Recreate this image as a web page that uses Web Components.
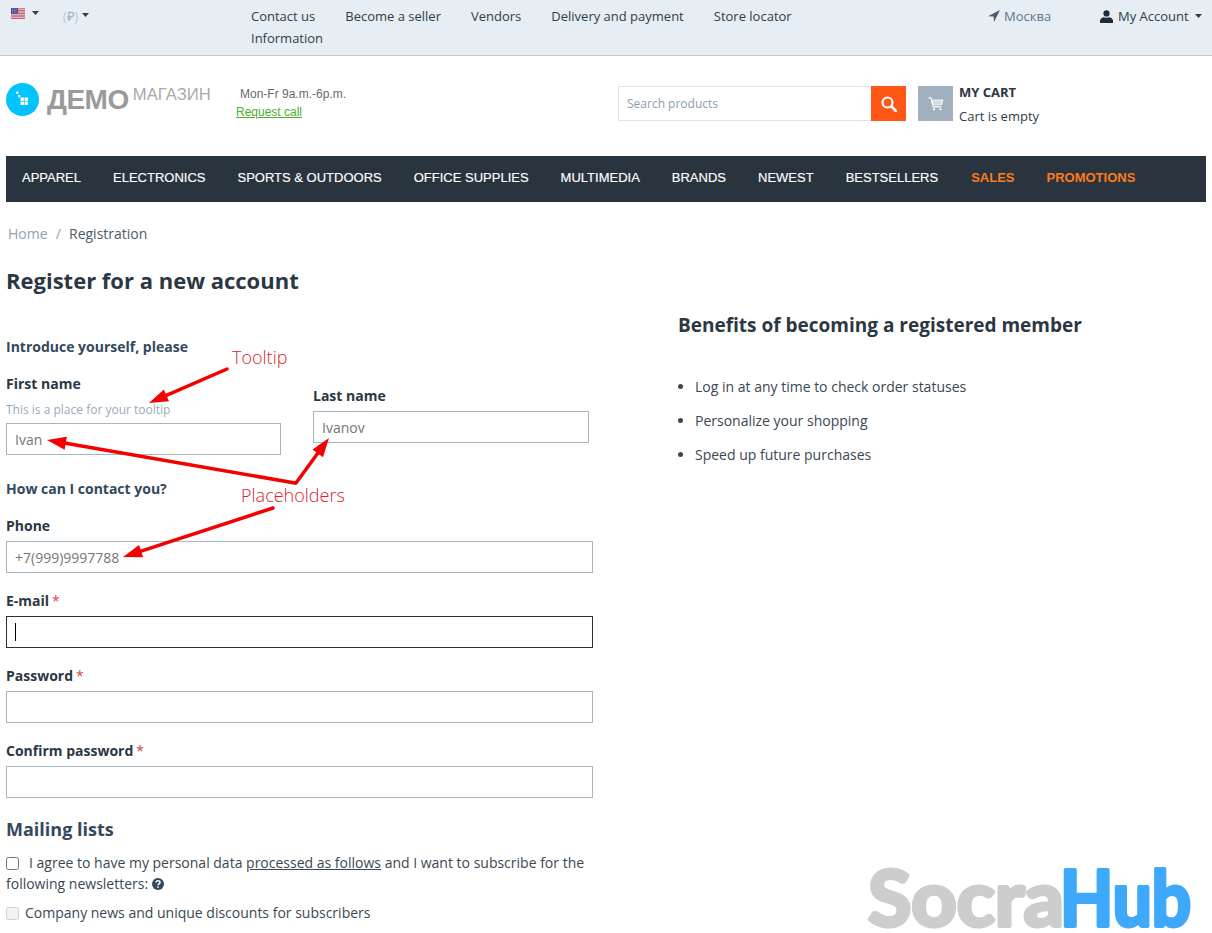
<!DOCTYPE html>
<html lang="en">
<head>
<meta charset="utf-8">
<title>Register for a new account</title>
<style>
    html, body { margin: 0; height: 933px; overflow: hidden; background: #fff; }
    body { position: relative; font: 14px/20px "Open Sans", sans-serif; color: #2c3744; }
</style>
</head>
<body>
<top-bar></top-bar>
<site-header></site-header>
<main-nav></main-nav>
<bread-crumbs></bread-crumbs>
<register-page></register-page>
<note-layer></note-layer>
<hub-mark></hub-mark>

<script>
const CARET = `<svg class="caret" width="7" height="4" viewBox="0 0 7 4"><path d="M0 0h7L3.5 4z" fill="currentColor"/></svg>`;

const FLAG = `<svg width="14" height="11" viewBox="0 0 14 11">
    <rect width="14" height="11" fill="#f3f3f6"/>
    <path d="M0 .8h14M0 2.4h14M0 4h14M0 5.6h14M0 7.2h14M0 8.8h14M0 10.4h14" stroke="#b5354a" stroke-width=".85"/>
    <rect width="7" height="5.6" fill="#47478f"/>
    <path d="M1 1h5M1 2.5h5M1 4h5" stroke="#c4c4e2" stroke-width=".7" stroke-dasharray="1 .8"/>
</svg>`;

class TopBar extends HTMLElement {
    constructor() {
        super();
        this.attachShadow({ mode: 'open' });
        this.shadowRoot.innerHTML = `
<style>
    :host {
        display: flex;
        height: 55px;
        box-sizing: content-box;
        background: #e6eef3;
        border-bottom: 1px solid #b6cbd9;
        font: 13px/22px "Open Sans", sans-serif;
        color: #2f3d4b;
    }
    .flag { width: 52px; flex: none; padding: 4px 0 0 11px; display: flex; gap: 7px; align-items: center; height: 18px; box-sizing: content-box; }
    .cur { width: 188px; flex: none; padding-top: 5px; font-size: 13px; font-weight: 300; color: #9fb0bf; display: flex; gap: 4px; height: 22px; align-items: center; }
    .cur .caret { color: #2f3d4b; margin-top: -3px; }
    nav { width: 600px; flex: none; margin-top: 5px; display: flex; flex-wrap: wrap; column-gap: 30px; align-content: flex-start; }
    .city { width: 112px; flex: none; margin-left: 137px; margin-top: 5px; height: 22px; display: flex; align-items: center; gap: 4px; color: #5f7589; }
    .acct { margin-top: 5px; height: 22px; display: flex; align-items: center; gap: 5px; white-space: nowrap; }
    .acct .caret { margin-left: 1px; }
</style>
<div class="flag">${FLAG}${CARET}</div>
<div class="cur"><span>(₽)</span>${CARET}</div>
<nav>
    <span>Contact us</span><span>Become a seller</span><span>Vendors</span>
    <span>Delivery and payment</span><span>Store locator</span><span>Information</span>
</nav>
<div class="city">
    <svg width="12" height="12" viewBox="0 0 12 12"><path d="M12 0L0 6.2l5.6.3.4 5.5z" fill="#4a5c6c"/></svg>
    <span>Москва</span>
</div>
<div class="acct">
    <svg width="13" height="13" viewBox="0 0 13 13" fill="#1f2a35"><circle cx="6.5" cy="3.4" r="3.1"/><path d="M0 13v-2.2C0 8.6 2.4 7.4 4 7.2c1.5.7 3.5.7 5 0 1.600.2 4 1.400 4 3.600V13z"/></svg>
    <span>My Account</span>${CARET}
</div>`;
    }
}

class SiteHeader extends HTMLElement {
    constructor() {
        super();
        this.attachShadow({ mode: 'open' });
        this.shadowRoot.innerHTML = `
<style>
    :host { display: flex; height: 100px; padding: 27px 6px 0; box-sizing: border-box; align-items: flex-start; }
    .logo { display: flex; width: 230px; height: 33px; align-items: center; }
    .mark { width: 33px; height: 33px; flex: none; }
    .demo { margin-left: 8px; font: bold 28px/33px "Liberation Sans", sans-serif; color: #9a9a9a; letter-spacing: -.5px; }
    .shop { margin-left: 4px; font: 16.700px/22px "Liberation Sans", sans-serif; color: #a9a9a9; margin-top: -9px; }
    .hours { width: 382px; font: 12px/18px "Liberation Sans", sans-serif; color: #6a6a6a; margin-top: 2px; }
    .hours div { padding-left: 4px; }
    .hours a { color: #4cae2e; text-decoration: underline; }
    .search { display: flex; width: 288px; height: 35px; margin-top: 3px; }
    .box { flex: 1; border: 1px solid #e3e3e3; border-right: 0; padding-left: 8px; font: 12px/33px "Open Sans", sans-serif; color: #8d9dac; }
    .go { width: 35px; background: #ff5716; display: flex; align-items: center; justify-content: center; }
    .bag { width: 35px; height: 35px; margin: 3px 0 0 12px; background: #a0b0bf; display: flex; align-items: center; justify-content: center; }
    .cart { margin-left: 6px; margin-top: -3px; font: 13px/24px "Open Sans", sans-serif; color: #2f3d4b; }
    .cart b { display: block; color: #2b3640; }
</style>
<div class="logo">
    <svg class="mark" viewBox="0 0 33 33">
        <circle cx="16.500" cy="16.500" r="16.500" fill="#00c3ff"/>
        <g fill="#fff"><rect x="10" y="8.500" width="2.400" height="2.400"/><rect x="12" y="12" width="2.400" height="2.400"/>
        <rect x="14.500" y="14.500" width="3.400" height="3.400"/><rect x="18.600" y="14.500" width="3.400" height="3.400"/>
        <rect x="14.500" y="18.600" width="3.400" height="3.400"/><rect x="18.600" y="18.600" width="3.400" height="3.400"/></g>
    </svg>
    <span class="demo">ДЕМО</span><span class="shop">МАГАЗИН</span>
</div>
<div class="hours"><div>Mon-Fr 9a.m.-6p.m.</div><a>Request call</a></div>
<div class="search">
    <div class="box">Search products</div>
    <div class="go"><svg width="16" height="16" viewBox="0 0 16 16" fill="none" stroke="#fff"><circle cx="6.500" cy="6.500" r="5" stroke-width="2.200"/><path d="M10.500 10.500L15 15" stroke-width="2.600" stroke-linecap="round"/></svg></div>
</div>
<div class="bag"><svg width="16" height="14" viewBox="0 0 16 14" fill="none" stroke="#fff"><path d="M.5 .8h2.400l2.400 9h8" stroke-width="1.200"/><path d="M3.800 3h11.200l-1.200 4.800H5z" fill="#fff" fill-opacity=".55" stroke-width=".8"/><circle cx="6" cy="12.300" r="1.100" fill="#fff" stroke="none"/><circle cx="12.500" cy="12.300" r="1.100" fill="#fff" stroke="none"/></svg></div>
<div class="cart"><b>MY CART</b>Cart is empty</div>`;
    }
}

class MainNav extends HTMLElement {
    constructor() {
        super();
        this.attachShadow({ mode: 'open' });
        const items = ['Apparel', 'Electronics', 'Sports & Outdoors', 'Office supplies', 'Multimedia', 'Brands', 'Newest', 'Bestsellers'];
        this.shadowRoot.innerHTML = `
<style>
    :host {
        display: flex;
        margin: 0 6px;
        height: 46px;
        background: #29343f;
        font: 13px/43px "Liberation Sans", sans-serif;
        color: #fff;
        text-transform: uppercase;
        -webkit-text-stroke: .15px currentColor;
    }
    span { padding: 0 16px; white-space: nowrap; }
    span:first-child { padding-left: 14px; }
    .hot { color: #ff7a1a; font-weight: bold; -webkit-text-stroke: 0; }
    .hot:nth-last-child(2) { margin-left: 1px; }
</style>
${items.map(i => `<span>${i.replace('&', '&amp;')}</span>`).join('')}
<span class="hot">Sales</span><span class="hot">Promotions</span>`;
    }
}

class BreadCrumbs extends HTMLElement {
    constructor() {
        super();
        this.attachShadow({ mode: 'open' });
        this.shadowRoot.innerHTML = `
<style>
    :host { display: block; margin: 21px 8px 21px; padding-top: 1px; font: 14px/20px "Open Sans", sans-serif; color: #4b5b69; }
    a { color: #8fa3b4; }
    i { font-style: normal; color: #8fa3b4; margin: 0 4.500px; }
</style>
<a>Home</a> <i>/</i> Registration`;
    }
}

class FormField extends HTMLElement {
    constructor() {
        super();
        this.attachShadow({ mode: 'open' });
        const hint = this.getAttribute('hint');
        const star = this.hasAttribute('required') ? '<em>*</em>' : '';
        const focused = this.hasAttribute('focused');
        this.shadowRoot.innerHTML = `
<style>
    :host { display: block; margin-bottom: 18px; }
    label { display: block; font: bold 14px/20px "Open Sans", sans-serif; color: #2c3744; margin-bottom: 5px; }
    label.tight { margin-bottom: 9px; }
    em { font-style: normal; font-weight: normal; color: #e0413d; margin-left: 3px; }
    .hint { font: 12px/14px "Open Sans", sans-serif; color: #9aabba; margin-bottom: 6px; }
    .box {
        height: 32px;
        box-sizing: border-box;
        border: 1px solid #a5b5c2;
        padding: 2px 8px 0;
        font: 14px/28px "Open Sans", sans-serif;
        color: #757575;
        display: flex;
        align-items: center;
    }
    .focused { border-color: #24303b; padding-top: 0; }
    .cursor { width: 1px; height: 18px; background: #000; }
</style>
<label class="${hint ? 'tight' : ''}">${this.getAttribute('label')}${star}</label>
${hint ? `<div class="hint">${hint}</div>` : ''}
<div class="box ${focused ? 'focused' : ''}" role="textbox"><slot></slot>${focused ? '<span class="cursor"></span>' : ''}</div>`;
    }
}

class RegisterPage extends HTMLElement {
    constructor() {
        super();
        this.attachShadow({ mode: 'open' });
        this.shadowRoot.innerHTML = `
<style>
    :host { display: flex; padding-left: 6px; font: 14px/20px "Open Sans", sans-serif; color: #3a4754; }
    .left { width: 587px; flex: none; }
    .right { margin-left: 85px; padding-top: 48px; }
    h1 { margin: 0 0 42px; font: bold 22px/30px "Open Sans", sans-serif; color: #2c3744; }
    h2 { margin: 0 0 17px; font: bold 14px/20px "Open Sans", sans-serif; color: #34485c; }
    h3 { margin: 0 0 40px; font: bold 19px/24px "Open Sans", sans-serif; color: #2c3744; }
    h4 { margin: 19px 0 11px; font: bold 18px/24px "Open Sans", sans-serif; color: #34485c; }
    .names { display: flex; gap: 32px; margin-bottom: 6px; }
    .names form-field:first-child { width: 275px; }
    .names form-field:last-child { width: 276px; margin-top: 12px; }
    ul { margin: 0; padding: 0 0 0 17px; }
    li { margin-bottom: 14px; }
    .check { line-height: 21px; }
    .check input { margin: 0 6px 0 0; width: 13px; height: 13px; vertical-align: -2px; }
    .agree input { margin-right: 10px; }
    .agree { margin-bottom: 8px; }
    .agree a { text-decoration: underline; color: #3a4754; }
    .agree svg { vertical-align: -1px; }
    .off input { appearance: none; box-sizing: border-box; border: 1px solid #cfcfcf; border-radius: 2.500px; background: #f3f3f3; }
</style>
<div class="left">
    <h1>Register for a new account</h1>
    <h2>Introduce yourself, please</h2>
    <div class="names">
        <form-field label="First name" hint="This is a place for your tooltip">Ivan</form-field>
        <form-field label="Last name">Ivanov</form-field>
    </div>
    <h2>How can I contact you?</h2>
    <form-field label="Phone">+7(999)9997788</form-field>
    <form-field label="E-mail" required focused></form-field>
    <form-field label="Password" required></form-field>
    <form-field label="Confirm password" required style="margin-bottom:0"></form-field>
    <h4>Mailing lists</h4>
    <div class="check agree"><input type="checkbox"><span>I agree to have my personal data</span> <a>processed as follows</a> <span>and I want to subscribe for the</span><br>
        <span>following newsletters:</span>
        <svg width="12" height="12" viewBox="0 0 12 12"><circle cx="6" cy="6" r="6" fill="#34485c"/><path d="M4 4.600C4 3.400 4.900 2.800 6 2.800s2 .7 2 1.700c0 1.400-2 1.300-2 2.700" fill="none" stroke="#fff" stroke-width="1.500"/><rect x="5.200" y="8.300" width="1.600" height="1.500" fill="#fff"/></svg>
    </div>
    <div class="check off"><input type="checkbox" disabled>Company news and unique discounts for subscribers</div>
</div>
<div class="right">
    <h3>Benefits of becoming a registered member</h3>
    <ul>
        <li>Log in at any time to check order statuses</li>
        <li>Personalize your shopping</li>
        <li>Speed up future purchases</li>
    </ul>
</div>`;
    }
}

// red annotations drawn over the form
class NoteLayer extends HTMLElement {
    constructor() {
        super();
        this.attachShadow({ mode: 'open' });
        const arrow = (x1, y1, x2, y2) => {
            const a = Math.atan2(y2 - y1, x2 - x1);
            const bx = x2 - Math.cos(a) * 19, by = y2 - Math.sin(a) * 19;
            const nx = -Math.sin(a) * 6.5, ny = Math.cos(a) * 6.5;
            return `<line x1="${x1}" y1="${y1}" x2="${bx}" y2="${by}"/>
                <polygon points="${x2},${y2} ${bx + nx},${by + ny} ${bx - nx},${by - ny}"/>`;
        };
        this.shadowRoot.innerHTML = `
<style>
    :host { position: absolute; left: 0; top: 0; width: 1212px; height: 933px; pointer-events: none; }
    svg { position: absolute; left: 0; top: 0; }
    line { stroke: #f40000; stroke-width: 3.500; stroke-linecap: round; }
    polygon { fill: #f40000; }
    span { position: absolute; font: 300 18px/24px "Open Sans", sans-serif; color: #d9232c; }
</style>
<svg width="1212" height="933">
    ${arrow(227, 369, 149, 403)}
    ${arrow(295, 483, 47, 440)}
    ${arrow(296, 483, 329, 438)}
    ${arrow(273, 508, 123, 557)}
</svg>
<span style="left:232px;top:345px">Tooltip</span>
<span style="left:241px;top:483px">Placeholders</span>`;
    }
}

class HubMark extends HTMLElement {
    constructor() {
        super();
        this.attachShadow({ mode: 'open' });
        this.shadowRoot.innerHTML = `
<style>
    :host { position: absolute; left: 860px; top: 850px; width: 352px; height: 83px; }
    text { font: bold 76px Lato, sans-serif; stroke-width: 4; stroke-linejoin: round; }
</style>
<svg width="352" height="83">
    <text y="76"><tspan x="8" textLength="196" lengthAdjust="spacingAndGlyphs" fill="#cdcdcd" stroke="#cdcdcd">Socra</tspan><tspan x="200" textLength="131" lengthAdjust="spacingAndGlyphs" fill="#3ea9fb" stroke="#3ea9fb">Hub</tspan></text>
</svg>`;
    }
}

customElements.define('top-bar', TopBar);
customElements.define('site-header', SiteHeader);
customElements.define('main-nav', MainNav);
customElements.define('bread-crumbs', BreadCrumbs);
customElements.define('form-field', FormField);
customElements.define('register-page', RegisterPage);
customElements.define('note-layer', NoteLayer);
customElements.define('hub-mark', HubMark);
</script>
</body>
</html>
